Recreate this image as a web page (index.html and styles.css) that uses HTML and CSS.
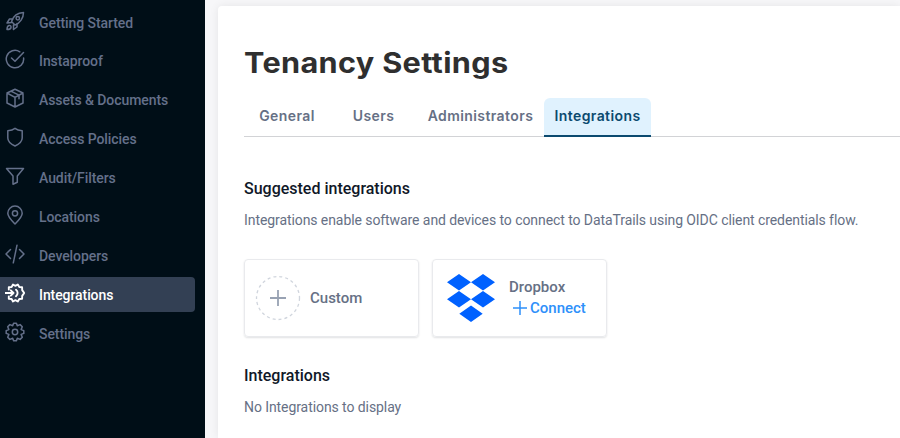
FILE: index.html
```html
<!DOCTYPE html>
<html lang="en">
<head>
<meta charset="utf-8">
<title>Tenancy Settings</title>
<link rel="stylesheet" href="styles.css">
</head>
<body>
<div class="app">
  <nav class="sidebar">
    <a class="item"><svg viewBox="0 0 20 20"><path d="M6.500 10.500C8 6 12 1.700 18.500 1.500 18.500 7 15 12 10 14zM8 8H4.500L2 12l4.500-.5M12 12.500v3.500L8.500 18.500V14M4 14.500c-2 .5-2 2.500-2 4 2 0 3.700-.5 4-2 .2-1.500-.8-2.300-2-2z"/><circle cx="12.800" cy="7.300" r="1.700"/></svg><span>Getting Started</span></a>
    <a class="item"><svg viewBox="0 0 20 20"><path d="M18.600 9A8.700 8.700 0 1 1 14.800 2.800M6.500 9l3.500 3.300L18.500 3.500"/></svg><span>Instaproof</span></a>
    <a class="item"><svg viewBox="0 0 20 20"><path d="M10 1.300 18 5v10l-8 4-8-4V5zM2 5l8 4.300L18 5M10 9.300V19M5.800 3.200l8.200 4v3.600"/></svg><span>Assets &amp; Documents</span></a>
    <a class="item"><svg viewBox="0 0 20 20"><path d="M10 1.300C12 2.900 14.500 3.500 17.200 3.700V11c0 3.300-3 6-7.200 8-4.200-2-7.200-4.700-7.200-8V3.700C5.500 3.500 8 2.900 10 1.300z"/></svg><span>Access Policies</span></a>
    <a class="item"><svg viewBox="0 0 20 20"><path d="M1.500 2.500h17L12.300 10v6.300L8 18.300V10z"/></svg><span>Audit/Filters</span></a>
    <a class="item"><svg viewBox="0 0 20 20"><path d="M10 19c-3.500-3.500-7.200-7-7.200-10.700a7.200 7.200 0 0 1 14.400 0C17.200 12 13.500 15.500 10 19z"/><circle cx="10" cy="8.300" r="2.600"/></svg><span>Locations</span></a>
    <a class="item"><svg viewBox="0 0 20 20"><path d="M5.500 5.500 1 10l4.500 4.500M14.500 5.500 19 10l-4.500 4.500M12 1.200 8.300 18.800"/></svg><span>Developers</span></a>
    <a class="item active"><svg viewBox="0 0 20 20"><path d="M3.800 6.500V4.200L6.600 4 8 1.500l2.400 1.300L12.800 1.500l1.500 2.500 2.800.2.100 2.900L19.200 10l-2 2.900-.1 2.900-2.800.2-1.500 2.500-2.400-1.300L8 18.500 6.600 16l-2.800-.2v-2.300M0 10h8.500M5.800 7.300 8.500 10l-2.700 2.700M11 6.800a4 4 0 0 1 0 6.400"/></svg><span>Integrations</span></a>
    <a class="item"><svg viewBox="0 0 20 20"><path d="M8.600 1.200h2.800l.9 2.600 2.800-1.200 2.200 2.200-1.200 2.800 2.700 1v2.800l-2.700 1 1.200 2.800-2.200 2.200-2.800-1.200-.9 2.600H8.600l-.9-2.600-2.800 1.200-2.200-2.200 1.200-2.800-2.700-1V8.600l2.700-1-1.200-2.800 2.200-2.200 2.800 1.200z"/><circle cx="10" cy="10" r="2.700"/></svg><span>Settings</span></a>
  </nav>
  <main class="panel">
    <h1>Tenancy Settings</h1>
    <div class="tabs">
      <a class="tab general">General</a>
      <a class="tab users">Users</a>
      <a class="tab admins">Administrators</a>
      <a class="tab selected">Integrations</a>
    </div>
    <h2 class="suggested">Suggested integrations</h2>
    <p class="intro">Integrations enable software and devices to connect to DataTrails using OIDC client credentials flow.</p>
    <div class="cards">
      <div class="card">
        <svg class="add" viewBox="0 0 46 46"><circle cx="23" cy="23" r="21.500"/><path d="M15 23h16M23 15v16"/></svg>
        <span class="name">Custom</span>
      </div>
      <div class="card dropbox">
        <svg class="logo" viewBox="0 0 48 48"><path d="M12 0 24 8.200 12 16.400 0 8.200zM36 0l12 8.200-12 8.200-12-8.200zM12 17l12 8.200-12 8.200L0 25.200zM36 17l12 8.200-12 8.200-12-8.200zM24 31.500l11.700 8.200L24 48l-11.700-8.300z"/></svg>
        <div class="info">
          <span class="name">Dropbox</span>
          <a class="connect"><svg viewBox="0 0 14 14"><path d="M0 7h14M7 0v14"/></svg><span>Connect</span></a>
        </div>
      </div>
    </div>
    <h2 class="current">Integrations</h2>
    <p class="empty">No Integrations to display</p>
  </main>
</div>
</body>
</html>
```
FILE: styles.css
```css
* { box-sizing: border-box; }
body { margin: 0; background: #f7f7f9; font-family: Roboto, sans-serif; overflow: hidden; }
h1, h2, p { margin: 0; white-space: nowrap; }
.app { display: flex; height: 438px; }
.sidebar { width: 205px; flex: none; background: #000e17; padding: 5px 10px 0 0; display: flex; flex-direction: column; gap: 3.900px; }
.item { display: flex; align-items: center; height: 35px; flex: none; padding-left: 5px; gap: 14px; border-radius: 0 4px 4px 0; color: #64708a; font-size: 14px; font-weight: 500; letter-spacing: -.08px; white-space: nowrap; }
.item svg { width: 20px; height: 20px; margin-top: -4px; fill: none; stroke: currentColor; stroke-width: 1.500; stroke-linejoin: round; stroke-linecap: round; }
.item span { margin-top: 0; }
.active { background: #334054; color: #fff; }
.active svg { stroke-width: 1.900; }
.panel { flex: 1; min-width: 0; margin: 6px 0 0 13px; padding-left: 26px; background: #fff; border-radius: 4px 0 0 0; box-shadow: 0 0 10px rgba(0,0,0,.08); }
h1 { font: 700 28px/36px Inter, sans-serif; letter-spacing: .3px; color: #2f2f2f; margin-top: 39px; transform: scaleX(1.095); transform-origin: left; width: max-content; }
.tabs { display: flex; height: 39px; margin-top: 17px; border-bottom: 1px solid #d2d3d6; font: 600 14px/36px Inter, sans-serif; letter-spacing: .4px; color: #667085; }
.tab { height: 39px; text-align: center; white-space: nowrap; }
.general { width: 86px; }
.users { width: 87px; }
.admins { width: 127px; }
.selected { width: 107px; background: #e0f2fe; color: #0b4a6f; border-radius: 6px 6px 0 0; border-bottom: 2px solid #0b4a6f; }
h2 { font-size: 16px; line-height: 20px; font-weight: 500; color: #101828; }
.suggested { margin-top: 42px; }
p { font-size: 14px; line-height: 20px; letter-spacing: -.078px; color: #667085; }
.intro { margin-top: 11px; }
.cards { display: flex; gap: 13px; margin-top: 29px; }
.card { width: 175px; height: 78px; display: flex; align-items: center; border: 1px solid #e9eaed; border-radius: 4px; box-shadow: 0 1px 2px rgba(16,24,40,.13); padding-left: 10px; gap: 9px; }
.add { width: 46px; height: 46px; flex: none; fill: none; stroke: #98a2b3; stroke-width: 1.800; }
.add circle { stroke: #d0d5dd; stroke-width: 1.300; stroke-dasharray: 3 3; }
.name { font-size: 15px; line-height: 20px; font-weight: 500; color: #667085; }
.dropbox { padding-left: 14px; gap: 14px; }
.logo { width: 48px; height: 48px; flex: none; fill: #0061ff; }
.info { display: flex; flex-direction: column; }
.connect { display: flex; align-items: center; gap: 3px; padding-left: 4px; color: #2e90fa; font-size: 15px; line-height: 22px; font-weight: 500; }
.connect svg { width: 14px; height: 14px; fill: none; stroke: currentColor; stroke-width: 1.500; }
.current { margin-top: 29px; }
.empty { margin-top: 11px; }
```
